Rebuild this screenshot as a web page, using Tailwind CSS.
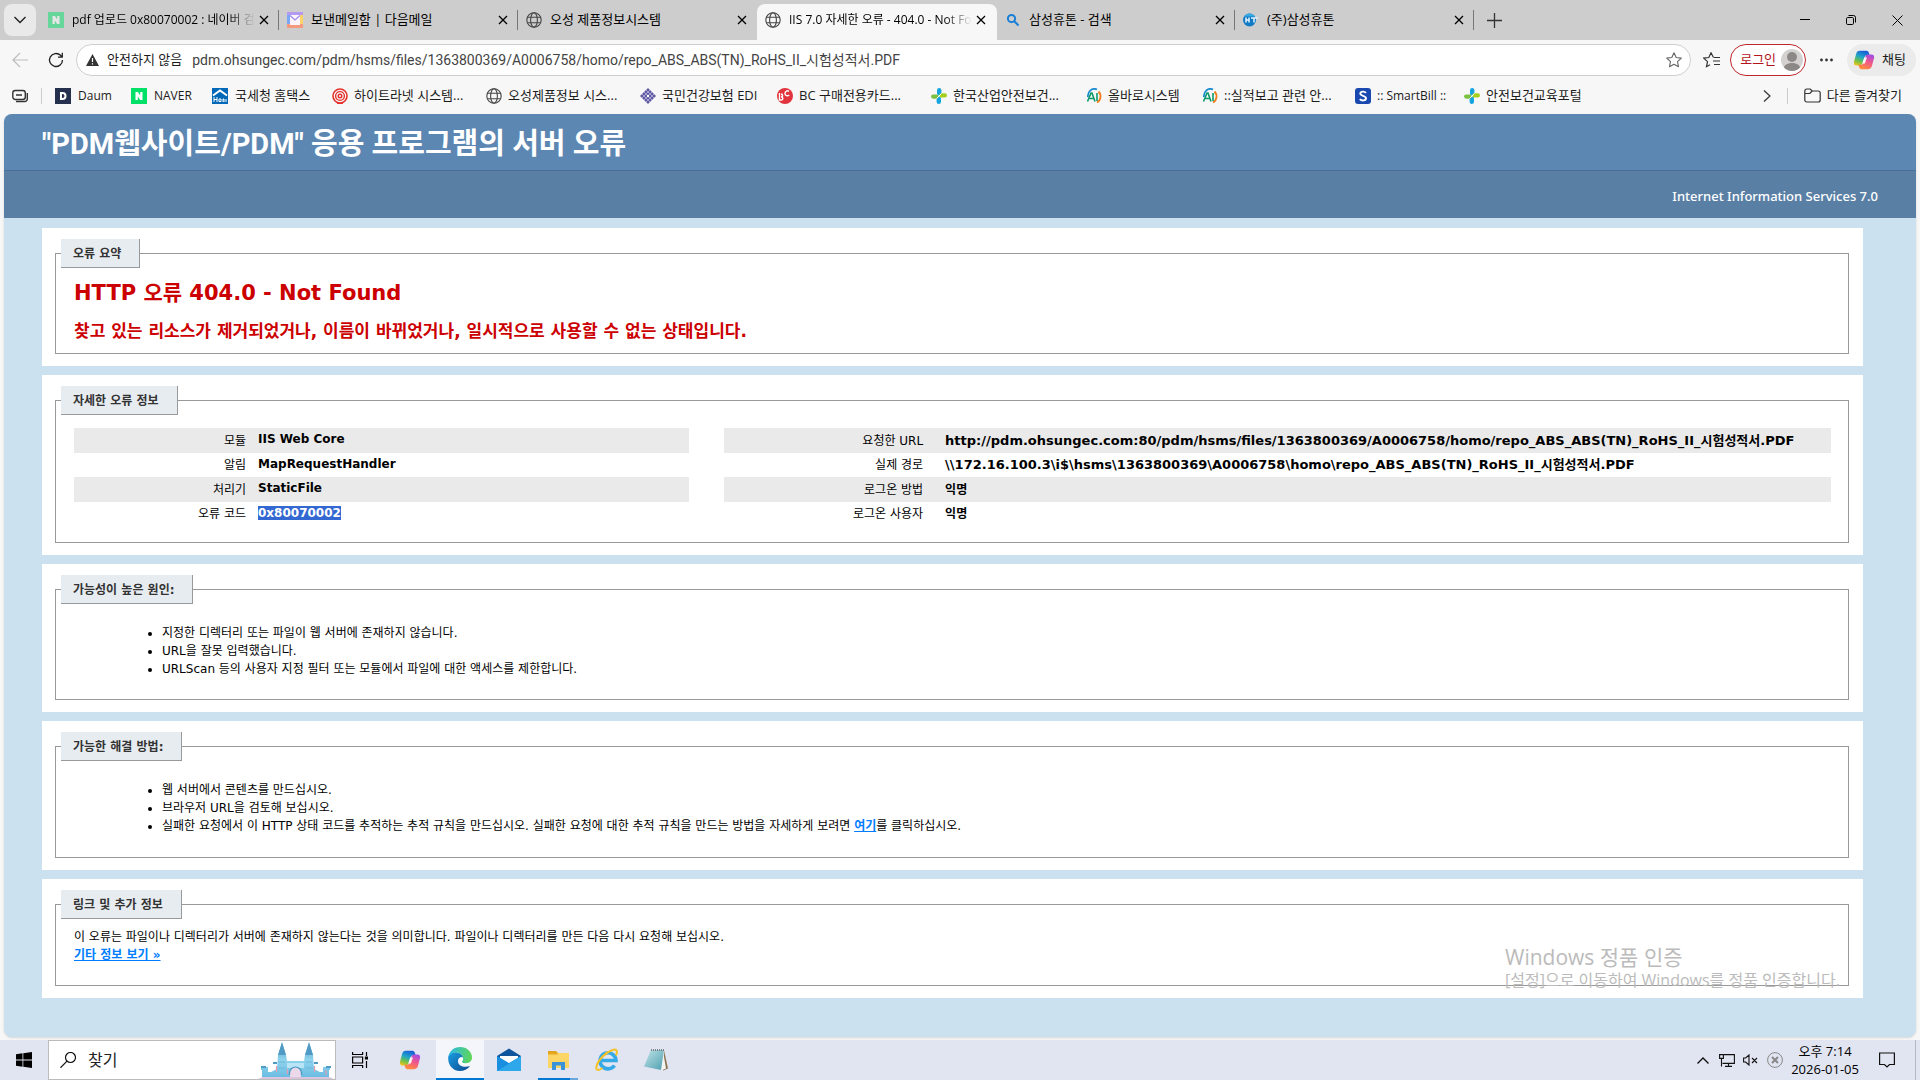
<!DOCTYPE html>
<html lang="ko">
<head>
    <meta charset="UTF-8">
    <meta name="viewport" content="width=device-width, initial-scale=1.0">
    <title>IIS 7.0 자세한 오류 - 404.0 - Not Found</title>
    <script src="https://cdn.jsdelivr.net/npm/@tailwindcss/browser@4"></script>
</head>
<body class="flex flex-col min-h-screen bg-[#f7f7f7] font-['Open_Sans','Noto_Sans_CJK_KR',sans-serif] text-xs text-[#1b1b1b] overflow-hidden">

    <!-- shared icons -->
    <svg class="absolute size-0" xmlns="http://www.w3.org/2000/svg">
        <defs>
            <linearGradient id="cpTop" x1="0.6" y1="0" x2="0.2" y2="1"><stop offset="0" stop-color="#1a5fd8"/><stop offset=".4" stop-color="#1fa5c8"/><stop offset=".7" stop-color="#6cc04a"/><stop offset="1" stop-color="#f0c419"/></linearGradient>
            <linearGradient id="cpBot" x1="0.8" y1="0" x2="0.4" y2="1"><stop offset="0" stop-color="#a04be8"/><stop offset=".5" stop-color="#f0568c"/><stop offset="1" stop-color="#ff8a3c"/></linearGradient>
            <linearGradient id="edgeA" x1="0" y1="0" x2="1" y2="1"><stop offset="0" stop-color="#1b9de2"/><stop offset="1" stop-color="#0c4a8f"/></linearGradient>
            <linearGradient id="edgeB" x1="0" y1="0.4" x2="1" y2="0.5"><stop offset="0" stop-color="#2bb8e8"/><stop offset="1" stop-color="#5fd754"/></linearGradient>
            <linearGradient id="castle" x1="0" y1="0" x2="0" y2="1"><stop offset="0" stop-color="#4f9fc4"/><stop offset=".5" stop-color="#8fd4ee"/><stop offset="1" stop-color="#6cbce2"/></linearGradient>
            <linearGradient id="note" x1="0" y1="0" x2="1" y2="1"><stop offset="0" stop-color="#bfe3e8"/><stop offset="1" stop-color="#4f9fb0"/></linearGradient>
            <symbol id="i-close" viewBox="0 0 10 10"><path d="M1 1l8 8M9 1L1 9" stroke="currentColor" stroke-width="1.3" fill="none"/></symbol>
            <symbol id="i-globe" viewBox="0 0 16 16"><g fill="none" stroke="#444" stroke-width="1.1"><circle cx="8" cy="8" r="7.2"/><ellipse cx="8" cy="8" rx="3.4" ry="7.2"/><path d="M1.6 5.2h12.8M1.6 10.8h12.8"/></g></symbol>
            <symbol id="i-naver" viewBox="0 0 16 16"><path fill="#03e068" d="M0 0h16v16H0z"/><path fill="#fff" d="M4.5 4h2.4l2.3 3.6V4h2.3v8H9.2L6.8 8.4V12H4.5z"/></symbol>
            <symbol id="i-copilot" viewBox="0 0 24 22"><path fill="url(#cpTop)" d="M7.500 1h7.200c1.600 0 2.300 1 2.800 2.600l.6 2.200h-2.600c-1.800 0-2.600 1-3.100 2.600l-1.900 6c-.6 1.900-1.500 2.600-3.200 2.600H3.900c-2.400 0-3.400-1.600-2.800-4l2.200-8.400C3.900 2.300 5.300 1 7.500 1z"/><path fill="url(#cpBot)" d="M16.500 21H9.300c-1.600 0-2.300-1-2.800-2.600L6 16.200h2.500c1.800 0 2.600-1 3.100-2.600l1.900-6c.6-1.900 1.500-2.600 3.200-2.600h3.400c2.400 0 3.400 1.600 2.800 4l-2.200 8.400C20.100 19.700 18.700 21 16.500 21z"/><path fill="#fff" fill-opacity=".9" d="M12.300 8.200h2.900l-2.200 6.500h-2.900z"/></symbol>
            <symbol id="i-cross" viewBox="0 0 16 16"><rect x="6" y="0" width="4.4" height="7.5" rx="2.2" fill="#14a5e0"/><rect x="5.6" y="8.5" width="4.4" height="7.5" rx="2.2" fill="#14a5e0"/><rect x="0" y="6.5" width="7.8" height="4.2" rx="2.1" fill="#7cc242"/><rect x="8.2" y="5.3" width="7.8" height="4.2" rx="2.1" fill="#a5cf1f"/><path d="M5.500 10.500l5-5" stroke="#fff" stroke-width="1"/></symbol>
            <symbol id="i-allbaro" viewBox="0 0 16 16"><path d="M2 9a6.500 7 0 0 1 9-7.500" fill="none" stroke="#1b8bd0" stroke-width="1.800"/><path d="M12.500 3.500a7 7 0 0 1-1.500 11" fill="none" stroke="#f07d1a" stroke-width="1.800"/><path d="M1.500 13.500L5 5h1l3 8.500M3.500 10.500h4.300" fill="none" stroke="#0b9a6d" stroke-width="1.600"/><path d="M11 5v8" stroke="#0b9a6d" stroke-width="1.600"/></symbol>
        </defs>
    </svg>

    <!-- tab strip -->
    <header>
        <div class="flex items-end h-10 bg-[#cdcdcd] pl-1 text-black">
            <button aria-label="탭 검색" class="flex items-center justify-center self-center size-8 mr-1 rounded-lg bg-[#e9e9e9]">
                <svg class="w-3 h-2" viewBox="0 0 12 8" fill="none" stroke="#222" stroke-width="1.4"><path d="M.5 1L6 6.500 11.500 1"/></svg>
            </button>
            <div class="flex items-center w-[239px] h-9 pl-2 pr-[10px] pb-1">
                <svg class="size-4 shrink-0 opacity-50"><use href="#i-naver"/></svg>
                <span class="flex-1 ml-2 overflow-hidden whitespace-nowrap mask-r-from-85%">pdf 업로드 0x80070002 : 네이버 검색</span>
                <button aria-label="탭 닫기" class="ml-1"><svg class="size-[10px]"><use href="#i-close"/></svg></button>
            </div>
            <div class="w-px h-5 mb-[10px] -ml-px bg-[#777]"></div>
            <div class="flex items-center w-[239px] h-9 pl-2 pr-[10px] pb-1">
                <svg class="size-4 shrink-0" viewBox="0 0 16 16"><path fill="#f2b3d0" d="M0 0h16v16H0z"/><path fill="#7aa7f5" d="M0 0h4v16H0z"/><path fill="#fbd36b" d="M12 0h4v16h-4z"/><path fill="#f59a7c" d="M0 12h16v4H0z"/><path fill="#b39af0" d="M0 0h16v3H0z"/><path fill="#fdf3fa" d="M3 3h10v10H3z"/><path d="M3 3.500l5 4.500 5-4.500" fill="none" stroke="#9c8df0" stroke-width="1.3"/></svg>
                <span class="flex-1 ml-2 overflow-hidden whitespace-nowrap text-[13px]">보낸메일함 | 다음메일</span>
                <button aria-label="탭 닫기" class="ml-1"><svg class="size-[10px]"><use href="#i-close"/></svg></button>
            </div>
            <div class="w-px h-5 mb-[10px] -ml-px bg-[#777]"></div>
            <div class="flex items-center w-[239px] h-9 pl-2 pr-[10px] pb-1">
                <svg class="size-4 shrink-0"><use href="#i-globe"/></svg>
                <span class="flex-1 ml-2 overflow-hidden whitespace-nowrap text-[13px]">오성 제품정보시스템</span>
                <button aria-label="탭 닫기" class="ml-1"><svg class="size-[10px]"><use href="#i-close"/></svg></button>
            </div>
            <div class="flex items-center w-[240px] h-9 pl-2 pr-[11px] pb-1 rounded-t-lg bg-[#f7f7f7]">
                <svg class="size-4 shrink-0"><use href="#i-globe"/></svg>
                <span class="flex-1 ml-2 overflow-hidden whitespace-nowrap mask-r-from-85%">IIS 7.0 자세한 오류 - 404.0 - Not Found</span>
                <button aria-label="탭 닫기" class="ml-1"><svg class="size-[10px]"><use href="#i-close"/></svg></button>
            </div>
            <div class="flex items-center w-[238px] h-9 pl-2 pr-[10px] pb-1">
                <svg class="size-4 shrink-0" viewBox="0 0 16 16" fill="none" stroke="#1a7fd8" stroke-width="2"><circle cx="6.5" cy="6.5" r="3.6"/><path d="M9 9l4.500 4.500"/></svg>
                <span class="flex-1 ml-2 overflow-hidden whitespace-nowrap text-[13px]">삼성휴톤 - 검색</span>
                <button aria-label="탭 닫기" class="ml-1"><svg class="size-[10px]"><use href="#i-close"/></svg></button>
            </div>
            <div class="w-px h-5 mb-[10px] -ml-px bg-[#777]"></div>
            <div class="flex items-center w-[239px] h-9 pl-2 pr-[10px] pb-1">
                <svg class="size-4 shrink-0" viewBox="0 0 16 16"><circle cx="6.5" cy="8" r="6.5" fill="#1279c4"/><path d="M1 4.500a6.500 6.500 0 0 1 11 0z" fill="#35a8e6"/><path d="M3 5.500v5M3 8h3M6 5.500v5M8 6h7M11 6v4.500" stroke="#e4f4ff" stroke-width="1.5" fill="none"/></svg>
                <span class="flex-1 ml-2 overflow-hidden whitespace-nowrap text-[13px]">(주)삼성휴톤</span>
                <button aria-label="탭 닫기" class="ml-1"><svg class="size-[10px]"><use href="#i-close"/></svg></button>
            </div>
            <div class="w-px h-5 mb-[10px] -ml-px bg-[#777]"></div>
            <button aria-label="새 탭" class="flex items-center h-10 ml-[13px]"><svg class="size-[15px]" viewBox="0 0 15 15" stroke="#333" stroke-width="1.3"><path d="M7.500 0v15M0 7.500h15"/></svg></button>
            <div class="flex items-center h-10 ml-auto">
                <button aria-label="최소화" class="flex justify-center w-[46px]"><svg class="size-[10px]" viewBox="0 0 10 10" stroke="#000"><path d="M0 4.500h10"/></svg></button>
                <button aria-label="이전 크기로 복원" class="flex justify-center w-[46px]"><svg class="size-[10px]" viewBox="0 0 10 10" fill="none" stroke="#000"><rect x=".5" y="2.5" width="7" height="7" rx="1.2"/><path d="M2.500.5h5a2 2 0 0 1 2 2v5"/></svg></button>
                <button aria-label="닫기" class="flex justify-center w-[46px]"><svg class="size-[11px]" viewBox="0 0 11 11" stroke="#000"><path d="M.5.5l10 10M10.500.5l-10 10"/></svg></button>
            </div>
        </div>

        <!-- address bar -->
        <div class="flex items-center h-10 pl-3 pr-1">
            <button aria-label="뒤로" class="mr-5"><svg class="size-4" viewBox="0 0 16 16" fill="none" stroke="#bdbdbd" stroke-width="1.2"><path d="M16 8H1M8 1L1 8l7 7"/></svg></button>
            <button aria-label="새로 고침" class="mr-3"><svg class="size-4" viewBox="0 0 16 16" fill="none" stroke="#222" stroke-width="1.3"><path d="M14.500 8a6.500 6.500 0 1 1-2-4.700L14 5M14.300.8V5.200H10"/></svg></button>
            <div class="flex flex-1 items-center h-8 pl-[9px] pr-2 border border-[#cfcfcf] rounded-full bg-white">
                <svg class="w-[13px] h-3 shrink-0" viewBox="0 0 13 12"><path fill="#333" d="M6.500 0L13 12H0z"/><path d="M6.500 4v4M6.500 9.300v1.300" stroke="#fff" stroke-width="1.2"/></svg>
                <label for="url" class="ml-2 text-[13px] whitespace-nowrap">안전하지 않음</label>
                <input id="url" type="text" class="flex-1 ml-[10px] font-['Roboto','Noto_Sans_CJK_KR',sans-serif] text-sm text-[#444] bg-transparent outline-none" value="pdm.ohsungec.com/pdm/hsms/files/1363800369/A0006758/homo/repo_ABS_ABS(TN)_RoHS_II_시험성적서.PDF">
                <button aria-label="즐겨찾기에 추가"><svg class="size-4" viewBox="0 0 16 16" fill="none" stroke="#666" stroke-width="1.1"><path d="M8 .8l2.200 4.700 5.100.6-3.800 3.500 1 5.100L8 12.200l-4.500 2.500 1-5.100L.7 6.100l5.100-.6z" stroke-linejoin="round"/></svg></button>
            </div>
            <button aria-label="즐겨찾기" class="ml-3"><svg class="w-[17px] h-4" viewBox="0 0 17 16" fill="none" stroke="#333" stroke-width="1.2"><path d="M10.500 5.500L8 .8 5.800 5.500.7 6.100l3.800 3.500-1 5.100L7 12.700M11 5.500h6M10 9h7M11 12.500h6"/></svg></button>
            <button class="flex items-center h-8 ml-[10px] pl-[9px] pr-[2px] border border-[#c0272d] rounded-full bg-white text-[13px] text-[#b4141c]">로그인
                <svg class="size-[22px] ml-[5px]" viewBox="0 0 22 22"><circle cx="11" cy="11" r="11" fill="#d4d2d1"/><circle cx="11" cy="8" r="5" fill="#8b8886"/><path fill="#8b8886" d="M3 18.500c1-6 15-6 16 0a11 11 0 0 1-16 0z"/></svg>
            </button>
            <button aria-label="설정 및 기타" class="mx-[14px]"><svg class="w-[13px] h-1" viewBox="0 0 13 4" fill="#333"><circle cx="1.5" cy="2" r="1.4"/><circle cx="6.5" cy="2" r="1.4"/><circle cx="11.5" cy="2" r="1.4"/></svg></button>
            <button class="flex items-center h-8 pl-[6px] pr-[10px] rounded-full bg-[#ebebeb] text-[13px]"><svg class="w-[22px] h-6 mr-[7px]"><use href="#i-copilot"/></svg>채팅</button>
        </div>

        <!-- bookmarks -->
        <nav class="flex items-center h-[34px] pb-[2px] pl-3 pr-[18px] text-[13px] whitespace-nowrap">
            <button aria-label="작업 영역"><svg class="size-4" viewBox="0 0 16 16" fill="none" stroke="#333" stroke-width="1.4"><rect x=".8" y="2.5" width="12.5" height="9" rx="2.5"/><path d="M4 7h6M15.300 5v6a2.500 2.500 0 0 1-2.500 2.500H4"/></svg></button>
            <div class="w-px h-4 mx-[13px] bg-[#ccc]"></div>
            <a href="#" class="flex items-center w-[76px] text-xs"><svg class="size-4 mr-[7px]" viewBox="0 0 16 16"><path fill="#25304f" d="M0 0h16v16H0z"/><path fill="none" stroke="#fff" stroke-width="2" d="M6 5h1.500c4 0 4 6 0 6H6z"/></svg>Daum</a>
            <a href="#" class="flex items-center w-[81px] text-xs"><svg class="size-4 mr-[7px]"><use href="#i-naver"/></svg>NAVER</a>
            <a href="#" class="flex items-center w-[120px]"><svg class="size-4 mr-[7px]" viewBox="0 0 16 16"><path fill="#0068b7" d="M0 0h16v16H0z"/><path d="M1 7.500l7-5 7 5" fill="none" stroke="#fff" stroke-width="2"/><path d="M2 9v5M2 11.500h3M5 9v5M7 11h2v2.500H7zM11 14v-3h1v3M14 11v3" fill="none" stroke="#fff" stroke-width="1"/></svg>국세청 홈택스</a>
            <a href="#" class="flex items-center w-[154px]"><svg class="size-4 mr-[6px]" viewBox="0 0 16 16" fill="none" stroke="#e5322d"><circle cx="8" cy="8" r="7" stroke-width="1.6"/><circle cx="8" cy="8" r="4.4" stroke-width="1.4"/><circle cx="8" cy="8" r="1.8" stroke-width="1.4"/><path d="M5 15.300h6" stroke-width="1.5"/></svg>하이트라넷 시스템...</a>
            <a href="#" class="flex items-center w-[154px]"><svg class="size-4 mr-[6px]"><use href="#i-globe"/></svg>오성제품정보 시스...</a>
            <a href="#" class="flex items-center w-[137px]"><svg class="size-4 mr-[6px]" viewBox="0 0 16 16"><path fill="#5f5aa2" d="M8 0l8 8-8 8-8-8z"/><path d="M4 4l8 8M12 4l-8 8M2 6l8 8M6 2l8 8M2 10l8-8M6 14l8-8" stroke="#c9c6e6" stroke-width=".7"/><circle cx="8" cy="8" r="1.2" fill="#fff"/></svg>국민건강보험 EDI</a>
            <a href="#" class="flex items-center w-[154px]"><svg class="size-4 mr-[6px]" viewBox="0 0 16 16"><circle cx="8" cy="8" r="8" fill="#e2343c"/><path d="M2.500 5v7h1.500c2.500 0 2.500-3.200 0-3.200 2.200 0 2-2.800 0-2.800M12 3.500c-1.500-1.500-4-.3-4 2s2.500 3 4.300 1.500" fill="none" stroke="#fff" stroke-width="1.4"/></svg>BC 구매전용카드...</a>
            <a href="#" class="flex items-center w-[155px]"><svg class="size-4 mr-[6px]"><use href="#i-cross"/></svg>한국산업안전보건...</a>
            <a href="#" class="flex items-center w-[116px]"><svg class="size-4 mr-[6px]"><use href="#i-allbaro"/></svg>올바로시스템</a>
            <a href="#" class="flex items-center w-[153px]"><svg class="size-4 mr-[6px]"><use href="#i-allbaro"/></svg>::실적보고 관련 안...</a>
            <a href="#" class="flex items-center w-[109px] text-xs"><svg class="size-4 mr-[6px]" viewBox="0 0 16 16"><rect width="16" height="16" rx="3" fill="#1848b0"/><path d="M11 4.800C9.500 3 5.300 3.200 5.300 5.600c0 2.700 5.700 1.800 5.700 4.700 0 2.600-4.500 2.800-6.200.8" fill="none" stroke="#fff" stroke-width="1.9"/></svg>:: SmartBill ::</a>
            <a href="#" class="flex items-center"><svg class="size-4 mr-[6px]"><use href="#i-cross"/></svg>안전보건교육포털</a>
            <button aria-label="더 보기" class="ml-auto"><svg class="w-2 h-3" viewBox="0 0 8 12" fill="none" stroke="#333" stroke-width="1.2"><path d="M1 .5L7 6l-6 5.500"/></svg></button>
            <div class="w-px h-4 mx-4 bg-[#ccc]"></div>
            <a href="#" class="flex items-center"><svg class="size-[17px] mr-[6px]" viewBox="0 0 17 16" fill="none" stroke="#333" stroke-width="1.2"><path d="M.8 3.500a2 2 0 0 1 2-2h3.400l2 2h6a2 2 0 0 1 2 2v7a2 2 0 0 1-2 2H2.800a2 2 0 0 1-2-2zM.8 6h5l2.400-2.500"/></svg>다른 즐겨찾기</a>
        </nav>
    </header>

    <!-- IIS error page -->
    <main class="relative flex-1 mx-1 mb-[3px] rounded-lg overflow-hidden bg-[#cbe1ef] font-['DejaVu_Sans','Noto_Sans_CJK_KR',sans-serif] text-xs leading-[18px] text-black shadow-sm">
        <div class="flex items-center h-14 pt-1 pl-[38px] bg-[#5c87b2]">
            <h1 class="font-['Roboto','Noto_Sans_CJK_KR',sans-serif] text-[29px] leading-9 font-bold text-white">"PDM웹사이트/PDM" 응용 프로그램의 서버 오류</h1>
        </div>
        <div class="h-12 pt-4 pr-[38px] border-t border-[#4a6f96] bg-[#5a7fa5] font-['Noto_Sans','Noto_Sans_CJK_KR',sans-serif] text-[13px] font-medium text-right text-white">Internet Information Services 7.0</div>

        <div class="flex flex-col gap-[9px] mt-[10px] ml-[38px] mr-[53px] mb-9">
            <section class="pt-[11px] pl-[13px] pr-[14px] pb-3 bg-white">
                <fieldset class="h-[115px] pl-[5px] pr-[17px] border border-[#999]">
                    <legend class="h-[29px] pl-3 pr-[18px] border-r border-b border-[#999] bg-[#e7ecf0] leading-[30px] font-bold text-[#333]">오류 요약</legend>
                    <h2 class="mt-[11px] ml-[13px] text-[21px] leading-7 font-bold text-[#c00]">HTTP 오류 404.0 - Not Found</h2>
                    <h3 class="mt-3 ml-[13px] text-[17px] leading-6 font-bold text-[#c00]">찾고 있는 리소스가 제거되었거나, 이름이 바뀌었거나, 일시적으로 사용할 수 없는 상태입니다.</h3>
                </fieldset>
            </section>

            <section class="pt-[11px] pl-[13px] pr-[14px] pb-3 bg-white">
                <fieldset class="h-[157px] pl-[5px] pr-[17px] border border-[#999]">
                    <legend class="h-[29px] pl-3 pr-[18px] border-r border-b border-[#999] bg-[#e7ecf0] leading-[30px] font-bold text-[#333]">자세한 오류 정보</legend>
                    <div class="flex items-start justify-between mt-[13px] ml-[13px]">
                        <table class="w-[35%]">
                            <tr class="h-[25px] bg-[#eaeaea]"><th class="w-[172px] text-right font-normal">모듈</th><td class="pl-3 pb-[3px] font-bold">IIS Web Core</td></tr>
                            <tr class="h-6"><th class="text-right font-normal">알림</th><td class="pl-3 pb-[3px] font-bold">MapRequestHandler</td></tr>
                            <tr class="h-[25px] bg-[#eaeaea]"><th class="text-right font-normal">처리기</th><td class="pl-3 pb-[3px] font-bold">StaticFile</td></tr>
                            <tr class="h-6"><th class="text-right font-normal">오류 코드</th><td class="pl-3 pb-[3px] font-bold"><span class="bg-[#3367d1] text-white">0x80070002</span></td></tr>
                        </table>
                        <table class="w-[63%]">
                            <tr class="h-[25px] bg-[#eaeaea]"><th class="w-[199px] text-right font-normal">요청한 URL</th><td class="pl-[22px] text-[13px] font-bold whitespace-nowrap">http://pdm.ohsungec.com:80/pdm/hsms/files/1363800369/A0006758/homo/repo_ABS_ABS(TN)_RoHS_II_시험성적서.PDF</td></tr>
                            <tr class="h-6"><th class="text-right font-normal">실제 경로</th><td class="pl-[22px] text-[13px] font-bold whitespace-nowrap">\\172.16.100.3\i$\hsms\1363800369\A0006758\homo\repo_ABS_ABS(TN)_RoHS_II_시험성적서.PDF</td></tr>
                            <tr class="h-[25px] bg-[#eaeaea]"><th class="text-right font-normal">로그온 방법</th><td class="pl-[22px] font-bold">익명</td></tr>
                            <tr class="h-6"><th class="text-right font-normal">로그온 사용자</th><td class="pl-[22px] font-bold">익명</td></tr>
                        </table>
                    </div>
                </fieldset>
            </section>

            <section class="pt-[11px] pl-[13px] pr-[14px] pb-3 bg-white">
                <fieldset class="h-[125px] pl-[5px] pr-[17px] border border-[#999]">
                    <legend class="h-[29px] pl-3 pr-[18px] border-r border-b border-[#999] bg-[#e7ecf0] leading-[30px] font-bold text-[#333]">가능성이 높은 원인:</legend>
                    <ul class="mt-5 ml-[101px] list-disc">
                        <li>지정한 디렉터리 또는 파일이 웹 서버에 존재하지 않습니다.</li>
                        <li>URL을 잘못 입력했습니다.</li>
                        <li>URLScan 등의 사용자 지정 필터 또는 모듈에서 파일에 대한 액세스를 제한합니다.</li>
                    </ul>
                </fieldset>
            </section>

            <section class="pt-[11px] pl-[13px] pr-[14px] pb-3 bg-white">
                <fieldset class="h-[126px] pl-[5px] pr-[17px] border border-[#999]">
                    <legend class="h-[29px] pl-3 pr-[18px] border-r border-b border-[#999] bg-[#e7ecf0] leading-[30px] font-bold text-[#333]">가능한 해결 방법:</legend>
                    <ul class="mt-5 ml-[101px] list-disc">
                        <li>웹 서버에서 콘텐츠를 만드십시오.</li>
                        <li>브라우저 URL을 검토해 보십시오.</li>
                        <li>실패한 요청에서 이 HTTP 상태 코드를 추적하는 추적 규칙을 만드십시오. 실패한 요청에 대한 추적 규칙을 만드는 방법을 자세하게 보려면 <a href="#" class="font-bold underline text-[#007eff]">여기</a>를 클릭하십시오.</li>
                    </ul>
                </fieldset>
            </section>

            <section class="pt-[11px] pl-[13px] pr-[14px] pb-3 bg-white">
                <fieldset class="h-24 pl-[5px] pr-[17px] border border-[#999]">
                    <legend class="h-[29px] pl-3 pr-[18px] border-r border-b border-[#999] bg-[#e7ecf0] leading-[30px] font-bold text-[#333]">링크 및 추가 정보</legend>
                    <p class="mt-[9px] ml-[13px]">이 오류는 파일이나 디렉터리가 서버에 존재하지 않는다는 것을 의미합니다. 파일이나 디렉터리를 만든 다음 다시 요청해 보십시오.</p>
                    <a href="#" class="ml-[13px] font-bold underline text-[#007eff]">기타 정보 보기 »</a>
                </fieldset>
            </section>
        </div>

        <!-- activation watermark -->
        <div class="absolute right-[78px] bottom-[47px] w-[333px] whitespace-nowrap font-['Open_Sans','Noto_Sans_CJK_KR',sans-serif] text-[#bbb] pointer-events-none">
            <p class="text-[21px] leading-[26px]">Windows 정품 인증</p>
            <p class="text-base leading-5">[설정]으로 이동하여 Windows를 정품 인증합니다.</p>
        </div>
    </main>

    <!-- taskbar -->
    <footer class="flex items-stretch h-10 bg-[#e1e4f1] text-black">
        <button aria-label="시작" class="flex items-center justify-center w-12"><svg class="size-4" viewBox="0 0 16 16"><path d="M0 2.200L6.500 1.300v6.200H0zM7.300 1.200L16 0v7.500H7.300zM0 8.400h6.500v6.300L0 13.800zM7.300 8.400H16V16l-8.700-1.200z"/></svg></button>
        <div class="flex items-center w-[288px] pl-[11px] border border-[#bcbcbc] bg-white">
            <svg class="size-4 shrink-0" viewBox="0 0 16 16" fill="none" stroke="#111" stroke-width="1.2"><circle cx="10.5" cy="5.5" r="5"/><path d="M7 9.200L.5 15.700"/></svg>
            <input type="text" aria-label="찾기" placeholder="찾기" class="flex-1 min-w-0 ml-3 text-base placeholder:text-[#222] outline-none">
            <svg class="w-[79px] h-[37px] shrink-0" viewBox="0 0 79 37">
                <ellipse cx="40" cy="40" rx="40" ry="9" fill="#d9c6de"/>
                <path fill="url(#castle)" d="M5 26h5v-1h2v5h3l6-3v-1l1-13 4-12 4 12 1 6h17l1-6 4-12 4 12 1 13v1l6 3h3v-5h7v3h-1v7H6v-7H5z"/>
                <path fill="#4f9bc6" d="M22 13l4-13 4 13zM49 13l4-13 4 13zM5 24h5v2H5zM17 20h4v2h-4zM58 20h4v2h-4zM70 24h5v2h-5z"/>
                <path stroke="#6fb7d8" stroke-width="1" d="M22.500 20h7M22.500 26h7M49.500 20h7M49.500 26h7" />
                <path fill="#b9e4f5" d="M31 21h17v5H31z"/>
                <path fill="#ebd9ea" d="M34 35v-4a5.500 5.500 0 0 1 11 0v4z"/>
                <path d="M33.500 33v-2a6 6 0 0 1 12 0v2" fill="none" stroke="#4a97bf" stroke-width="1.2"/>
                <path stroke="#e79bb0" stroke-width="1.2" d="M20.500 24v6M31.500 27v5M58.500 24v6M70 28v5"/>
            </svg>
        </div>
        <button aria-label="작업 보기" class="flex items-center justify-center w-12"><svg class="size-4" viewBox="0 0 16 16" fill="none" stroke="#000" stroke-width="1.2"><path d="M.6 0v2.500h10V0M.6 16v-2.500h10V16M.6 5h10v6H.6zM14.500 0v4M14.500 9v7"/><path fill="#000" d="M13.500 5h2v2h-2z"/></svg></button>
        <button aria-label="Copilot" class="flex items-center justify-center w-[52px]"><svg class="w-[22px] h-6"><use href="#i-copilot"/></svg></button>
        <button aria-label="Microsoft Edge" class="flex items-center justify-center w-12 border-b-2 border-[#0078d4] bg-[#f5f6fb]">
            <svg class="size-6" viewBox="0 0 24 24"><path fill="url(#edgeA)" d="M.3 9.500C2 5.500 6 4.500 9.500 5.500c4 1 5.500 3 5.500 5-3-1.200-5.500 1-5 4.200.6 4.300 6 6.300 12 4.300C19.500 22.500 16 24 12 24 5 24-.7 18 .3 9.500z"/><path fill="url(#edgeB)" d="M.3 10C1.300 4 6 0 12 0c7 0 12 5 12 10.300 0 4-3 6.200-6.300 6.200-2.500 0-4-.9-3.900-1.700.1-.6 1.200-1.200 1.200-3.500C15 7.500 11.500 5.500 7.500 5.500 4 5.500 1.500 7.500.3 10z"/><path fill="#fff" d="M12.500 10.600c1.500-.7 2.700.2 2.500 1.700-.2 1.300-1.200 1.900-1.200 2.500 0 .8 1.400 1.700 3.900 1.700 1.200 0 2.300-.3 3.300-.8-2 3.200-9.500 2.300-9.500-2 0-1.300.3-2.400 1-3.100z" fill-opacity=".85"/></svg>
        </button>
        <button aria-label="메일" class="flex items-center justify-center w-[50px]"><svg class="size-6" viewBox="0 0 24 24"><path fill="#0e559c" d="M0 8l12-7.500L24 8v4H0z"/><path fill="#fff" d="M3 8h18v6l-9 4-9-4z"/><path fill="#1a8fe0" d="M0 8l12 7L24 8v15H0z"/><path fill="#38b1ef" d="M24 8L0 23h24z" fill-opacity=".7"/><path fill="#fff" d="M3 8.200h18L12 14.800z"/></svg></button>
        <button aria-label="파일 탐색기" class="relative flex items-center justify-center w-12">
            <svg class="w-[21px] h-[19px]" viewBox="0 0 21 19"><path fill="#e2a41c" d="M0 0h8l2 2H0z"/><path fill="#fbd565" d="M0 2h21v15H0z"/><path fill="#e8a81e" d="M0 2h9l1 1.500H0z"/><path fill="#3a93d8" d="M4 11h13v8h-4v-4.500H8V19H4z"/></svg>
            <span class="absolute bottom-0 left-1 w-8 h-[2px] bg-[#0078d4]"></span><span class="absolute bottom-0 left-9 w-2 h-[2px] bg-[#6ba9dd]"></span>
        </button>
        <button aria-label="Internet Explorer" class="flex items-center justify-center w-[50px]"><svg class="size-6" viewBox="0 0 24 24" fill="none"><path d="M19.500 17.500a8 8 0 1 1 1.500-5H7" stroke="#36a9e8" stroke-width="3.6"/><path d="M21 7.500c2-4.500.5-7-3.500-5.500C11 4 3 12 1.500 18.500c-1 4 2 4.500 6 1.500" stroke="#f5c227" stroke-width="2"/></svg></button>
        <button aria-label="메모장" class="flex items-center justify-center w-12"><svg class="w-6 h-[22px]" viewBox="0 0 24 22"><path fill="#8a7350" d="M20 1.500l4 18-5 2z"/><path fill="#f4f4f4" d="M19 2l3 17.500-5 2z"/><path fill="url(#note)" d="M7 1h13l-3 20L0 17.500z"/><path stroke="#666" stroke-width="1.5" stroke-dasharray="1 1" d="M7 1h13"/></svg></button>

        <div class="flex items-center ml-auto pr-1">
            <button aria-label="숨겨진 아이콘 표시" class="mr-[10px]"><svg class="w-3 h-[7px]" viewBox="0 0 12 7" fill="none" stroke="#111" stroke-width="1.4"><path d="M.5 6.500L6 1l5.500 5.500"/></svg></button>
            <svg class="w-4 h-[13px] mr-2" viewBox="0 0 16 13" fill="none" stroke="#111" stroke-width="1.1"><path d="M5 .6h10.400v8.800H3.500M9.500 9.500v3M6 12.400h7M.6.6h3.800v3.800H.6zM2.500 4.500v8"/></svg>
            <svg class="w-[15px] h-3 mr-[9px]" viewBox="0 0 15 12" fill="none" stroke="#111" stroke-width="1.1"><path d="M.6 4h2L6 1v10L2.600 8h-2zM9 4l5 5M14 4L9 9"/></svg>
            <svg class="size-4 mr-2" viewBox="0 0 16 16" fill="none" stroke="#888"><circle cx="8" cy="8" r="7.4"/><path d="M5 5l6 6M11 5l-6 6" stroke-width="2"/></svg>
            <div class="mr-5 text-center text-[13px] leading-[18px]">오후 7:14<br>2026-01-05</div>
            <button aria-label="알림 센터" class="mr-5"><svg class="size-4" viewBox="0 0 16 16" fill="none" stroke="#111" stroke-width="1.2"><path d="M.6 1h14.800v11.500h-4.900L8 15l-2.500-2.500H.6z"/></svg></button>
            <div class="w-px h-10 bg-[#b5b8c4]"></div>
        </div>
    </footer>
</body>
</html>
